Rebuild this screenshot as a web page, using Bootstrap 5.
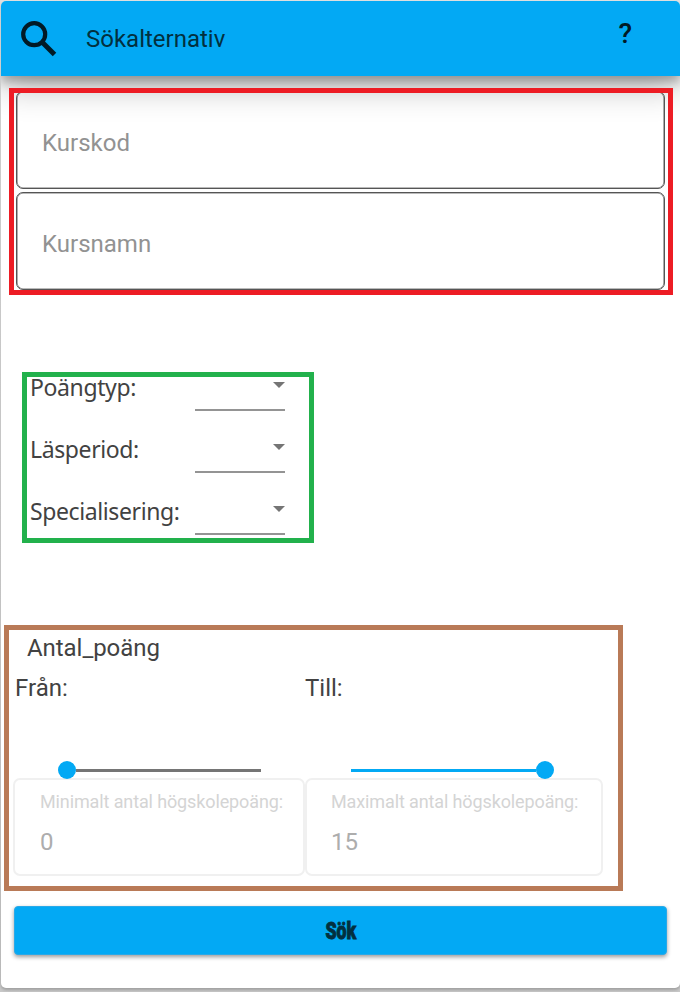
<!DOCTYPE html>
<html lang="sv">
<head>
<meta charset="utf-8">
<meta name="viewport" content="width=device-width, initial-scale=1">
<title>Sökalternativ</title>
<link href="https://cdn.jsdelivr.net/npm/bootstrap@5.3.0/dist/css/bootstrap.min.css" rel="stylesheet">
<style>
  body { background: #fff; font-family: Roboto, sans-serif; font-size: 24px; line-height: 28px; color: #424242; overflow: hidden; }
  .page { height: 992px; padding: 1px 0 0 1px; background: linear-gradient(#e0e0e0, #c8c8c8); }
  .panel { height: 987px; background: #fff; border-radius: 5px; overflow: hidden; box-shadow: 0 2px 3px rgba(0,0,0,.2); }
  .topbar { height: 75px; padding: 0 48px 0 20px; background: #03a9f4; box-shadow: 0 6px 10px rgba(0,0,0,.25), 0 10px 34px rgba(0,0,0,.3); color: #02303f; }
  .topbar .title { margin-left: 29px; }
  .topbar .help { font-weight: 500; font-size: 28px; color: #011a26; padding-bottom: 9px; }
  .frame { border: 5px solid; overflow: hidden; }
  .frame-red { width: 664px; height: 207px; margin: 12px 0 0 8px; border-color: #ed1c24; padding: 0 3px 0 2px; }
  .frame-green { width: 292px; height: 171px; margin: 77px 0 0 21px; border-color: #22b14c; }
  .frame-brown { width: 619px; height: 266px; margin: 82px 0 0 3px; border-color: #b97a57; }
  .field { display: block; width: 100%; height: 98px; padding: 6px 24px 0 25px; border: 1px solid #555; box-shadow: inset 0 0 0 .6px #777; border-radius: 7px; background: transparent; color: #424242; outline: 0; }
  .field::placeholder { color: #929292; opacity: 1; }
  .field-top { margin-top: -2px; }
  .field + .field { margin-top: 3px; }
  .pick { height: 62px; padding-left: 3px; font-family: "Noto Sans", sans-serif; font-size: 23px; }
  .pick .name { width: 165px; white-space: nowrap; letter-spacing: -.39px; margin-top: -4px; }
  .pick .drop { width: 90px; height: 34px; border-bottom: 2px solid #949494; padding: 5px 0 0; }
  .drop svg { display: block; margin-left: auto; }
  .heading { padding: 4px 0 0 18px; letter-spacing: -.05px; }
  .halves { padding: 12px 0 0 4px; }
  .half-a { width: 292px; }
  .half-b { width: 298px; }
  .half-a .cap { padding-left: 2px; }
  .half-a .slider { margin: 59px 0 0 45px; }
  .half-b .slider { margin: 59px 0 0 46px; }
  .slider { width: 203px; height: 18px; position: relative; z-index: 1; }
  .slider .track { height: 3px; }
  .slider .knob { width: 18px; height: 18px; border-radius: 50%; background: #03a9f4; }
  .grey { background: #757575; }
  .blue { background: #03a9f4; }
  .amount { height: 98px; margin-top: -1px; padding: 8px 25px 0; border: 2px solid #f0f0f0; border-radius: 7px; }
  .half-b .amount { padding-left: 24px; }
  .amount .hint { font-size: 18px; line-height: 28px; color: #d4d4d4; white-space: nowrap; letter-spacing: -.12px; }
  .amount .val { color: #adadad; margin-top: 12px; }
  .submit { width: 653px; height: 49px; margin: 15px 0 0 13px; border: 1px solid #29a9e8; border-radius: 4px; background: #03a9f4; box-shadow: 0 2px 4px rgba(0,0,0,.4); color: #02303f; font-weight: 900; padding: 0; }
  .submit span { display: inline-block; transform: scaleX(.74); -webkit-text-stroke: .9px #02303f; }
</style>
</head>
<body>
<div class="page">
  <main class="panel">
    <header class="topbar d-flex align-items-center">
      <svg width="36" height="36" viewBox="0 0 36 36" fill="none" stroke="#011a26"><circle cx="13.2" cy="13.2" r="11" stroke-width="4.2"/><path d="M21 21L33.5 33.5" stroke-width="5"/></svg>
      <div class="title">Sökalternativ</div>
      <div class="help ms-auto">?</div>
    </header>

    <section class="frame frame-red">
      <input class="field field-top" placeholder="Kurskod">
      <input class="field" placeholder="Kursnamn">
    </section>

    <section class="frame frame-green">
      <div class="pick d-flex"><div class="name">Poängtyp:</div><div class="drop"><svg width="12" height="6"><path d="M0 0H12L6 6Z" fill="#757575"/></svg></div></div>
      <div class="pick d-flex"><div class="name">Läsperiod:</div><div class="drop"><svg width="12" height="6"><path d="M0 0H12L6 6Z" fill="#757575"/></svg></div></div>
      <div class="pick d-flex"><div class="name">Specialisering:</div><div class="drop"><svg width="12" height="6"><path d="M0 0H12L6 6Z" fill="#757575"/></svg></div></div>
    </section>

    <section class="frame frame-brown">
      <div class="heading">Antal_poäng</div>
      <div class="d-flex halves">
        <div class="half-a">
          <div class="cap">Från:</div>
          <div class="slider d-flex align-items-center"><div class="knob"></div><div class="track grey flex-fill"></div></div>
          <div class="amount"><div class="hint">Minimalt antal högskolepoäng:</div><div class="val">0</div></div>
        </div>
        <div class="half-b">
          <div class="cap">Till:</div>
          <div class="slider d-flex align-items-center"><div class="track blue flex-fill"></div><div class="knob"></div></div>
          <div class="amount"><div class="hint">Maximalt antal högskolepoäng:</div><div class="val">15</div></div>
        </div>
      </div>
    </section>

    <button class="submit d-block" type="button"><span>Sök</span></button>
  </main>
</div>
<script src="https://cdn.jsdelivr.net/npm/bootstrap@5.3.0/dist/js/bootstrap.bundle.min.js"></script>
</body>
</html>
